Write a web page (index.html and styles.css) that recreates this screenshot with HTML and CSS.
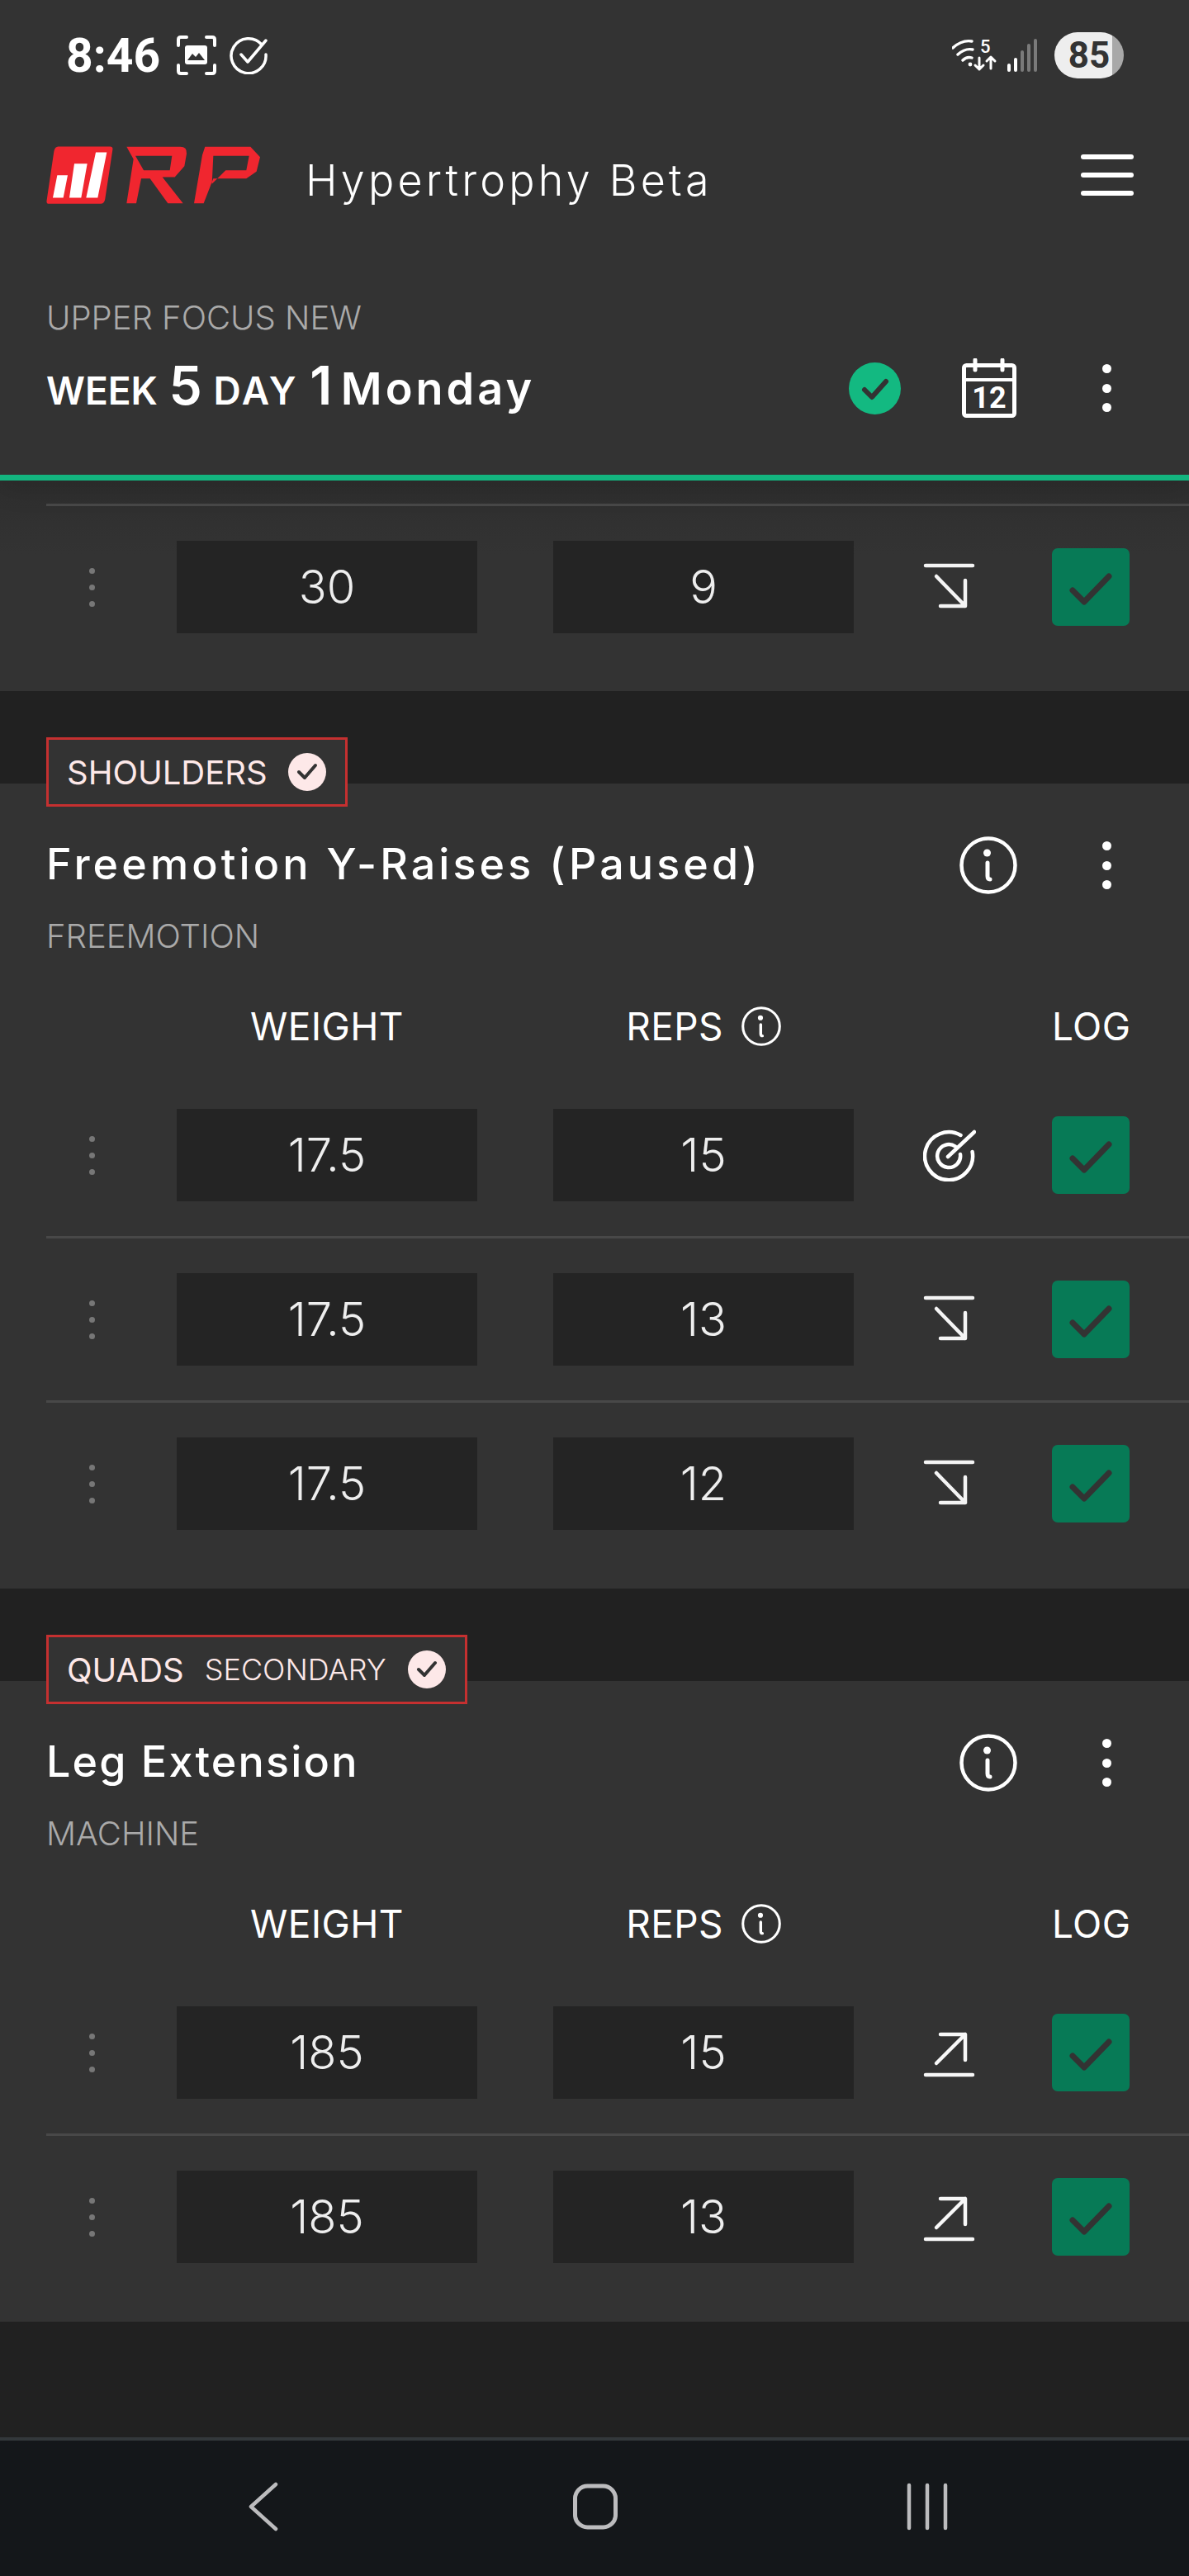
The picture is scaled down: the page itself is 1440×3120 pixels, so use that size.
FILE: index.html
```html
<!DOCTYPE html>
<html lang="en">
<head>
  <meta charset="UTF-8">
  <meta name="viewport" content="width=device-width, initial-scale=1.0">
  <title>RP Hypertrophy Beta</title>
  <link rel="stylesheet" href="styles.css">
</head>
<body>

  <svg class="sprite" aria-hidden="true">
    <symbol id="i-down" viewBox="0 0 64 64">
      <path d="M3 6H60M16 19L51 55M51 24V55H21" fill="none" stroke="#f4f4f4" stroke-width="4.5" stroke-linecap="round" stroke-linejoin="round"/>
    </symbol>
    <symbol id="i-up" viewBox="0 0 64 64">
      <path d="M3 59H60M16 45L51 10M21 10H51V41" fill="none" stroke="#f8f8f8" stroke-width="4.5" stroke-linecap="round" stroke-linejoin="round"/>
    </symbol>
    <symbol id="i-target" viewBox="0 0 64 64">
      <path d="M45.5 8A29 29 0 1 0 59.6 28M39 21.5A14 14 0 1 0 45 31M30 34L62 4" fill="none" stroke="#fff" stroke-width="4.5" stroke-linecap="round"/>
    </symbol>
    <symbol id="i-tick" viewBox="0 0 94 94">
      <path d="M25 51L39 65L69 34" fill="none" stroke="#333" stroke-width="7" stroke-linecap="round" stroke-linejoin="round"/>
    </symbol>
    <symbol id="i-info" viewBox="0 0 70 70">
      <circle cx="35" cy="35" r="32.5" fill="none" stroke="#fff" stroke-width="4.5"/>
      <circle cx="33.5" cy="20" r="4.5" fill="#fff"/>
      <path d="M34 32V48Q34 52 37 52" fill="none" stroke="#fff" stroke-width="5" stroke-linecap="round"/>
    </symbol>
    <symbol id="i-mini-tick" viewBox="0 0 46 46">
      <path d="M13 23L20 30L33 15" fill="none" stroke="#333" stroke-width="4" stroke-linecap="round" stroke-linejoin="round"/>
    </symbol>
  </svg>

  <header class="header">
    <div class="status-bar">
      <span class="clock">8:46</span>
      <svg class="status-frame" viewBox="0 0 48 48">
        <path d="M2 12V5Q2 2 5 2H12M36 2H43Q46 2 46 5V12M46 36V43Q46 46 43 46H36M12 46H5Q2 46 2 43V36" fill="none" stroke="#fff" stroke-width="4" stroke-linecap="round"/>
        <rect x="10" y="12" width="27" height="23" rx="3" fill="#fff"/>
        <path d="M13 30L19 22L23 26L27 21L34 30Z" fill="#333"/>
      </svg>
      <svg class="status-done" viewBox="0 0 46 46">
        <path d="M39 10A21 21 0 1 0 44 22" fill="none" stroke="#fff" stroke-width="3.5" stroke-linecap="round"/>
        <path d="M14 22L22 31L44 5" fill="none" stroke="#fff" stroke-width="3.5" stroke-linecap="round" stroke-linejoin="round"/>
      </svg>
      <div class="status-right">
        <svg class="status-wifi" viewBox="0 0 56 44">
          <path d="M1 13Q12 3 24 5M7 21Q16 13 25 15M13 28Q18 23 24 25" fill="none" stroke="#fff" stroke-width="3.4" stroke-linecap="round"/>
          <circle cx="22" cy="33" r="2.4" fill="#fff"/>
          <text x="34" y="19" class="wifi-five">5</text>
          <path d="M33 25V39M28 34L33 39L38 34M47 38V24M42 29L47 24L52 29" fill="none" stroke="#fff" stroke-width="3" stroke-linecap="round" stroke-linejoin="round"/>
        </svg>
        <svg class="status-signal" viewBox="0 0 38 40">
          <path d="M3 38V32M11 38V25" stroke="#fff" stroke-width="4" stroke-linecap="round"/>
          <path d="M19 38V16M27 38V8M35 38V2" stroke="#7a7a7a" stroke-width="4" stroke-linecap="round"/>
        </svg>
        <span class="battery">85</span>
      </div>
    </div>

    <div class="app-bar">
      <svg class="logo" viewBox="48 50 780 215">
        <path d="M92 54H280Q291 54 289 66L262 244Q260 262 245 262H58Q47 262 50 248L76 72Q79 54 92 54Z" fill="#f0262f"/>
        <path d="M88 158H126L110 240H72ZM150 116H197L175 240H132ZM228 75H268L235 240H193Z" fill="#fff"/>
        <path fill-rule="evenodd" d="M340 55H535Q560 55 558 80L550 125L515 165H470L545 260H490L425 170H393L375 260H340L365 100ZM372 88L402 140H497L505 88Z" fill="#f0262f"/>
        <path fill-rule="evenodd" d="M625 55H790L825 92L812 145L775 170H655L620 260H585L615 85ZM655 88L650 190L700 140H775L785 88Z" fill="#f0262f"/>
      </svg>
      <span class="app-title">Hypertrophy Beta</span>
      <button class="menu-btn" aria-label="Menu"><span></span><span></span><span></span></button>
    </div>

    <div class="workout">
      <p class="workout-name">UPPER FOCUS NEW</p>
      <div class="workout-row">
        <h1 class="workout-day"><small>WEEK</small> <b>5</b> <small class="day-label">DAY</small> <b>1</b> <span class="weekday">Monday</span></h1>
        <div class="workout-actions">
          <svg class="done-badge" viewBox="0 0 63 63">
            <circle cx="31.5" cy="31.5" r="31.5" fill="#13b981"/>
            <path d="M19 33L28 42L45 23" fill="none" stroke="#333" stroke-width="6" stroke-linecap="round" stroke-linejoin="round"/>
          </svg>
          <svg class="calendar" viewBox="0 0 72 72">
            <rect x="6.5" y="8.5" width="61" height="61" rx="3" fill="none" stroke="#fff" stroke-width="5"/>
            <path d="M4 26H70" stroke="#fff" stroke-width="4"/>
            <path d="M20 2V14M53 2V14" stroke="#fff" stroke-width="5" stroke-linecap="round"/>
            <text x="37" y="60" class="calendar-num">12</text>
          </svg>
          <span class="kebab"><i></i><i></i><i></i></span>
        </div>
      </div>
    </div>
  </header>

  <main class="main">
    <section class="card card-first">
      <div class="set-row">
        <span class="drag"><i></i><i></i><i></i></span>
        <div class="val">30</div>
        <div class="val">9</div>
        <svg class="trend"><use href="#i-down"/></svg>
        <svg class="log-box"><use href="#i-tick"/></svg>
      </div>
    </section>

    <section class="group">
      <div class="tag">
        <span class="tag-name">SHOULDERS</span>
        <svg class="tag-check" viewBox="0 0 46 46"><circle cx="23" cy="23" r="23" fill="#fde8e8"/><use href="#i-mini-tick"/></svg>
      </div>
      <div class="card">
        <div class="ex-head">
          <h2 class="ex-title ex-title-long">Freemotion Y-Raises (Paused)</h2>
          <svg class="info"><use href="#i-info"/></svg>
          <span class="kebab"><i></i><i></i><i></i></span>
        </div>
        <p class="ex-equip">FREEMOTION</p>
        <div class="cols">
          <span class="col-weight">WEIGHT</span>
          <span class="col-reps">REPS <svg class="info-small"><use href="#i-info"/></svg></span>
          <span class="col-log">LOG</span>
        </div>
        <div class="set-row">
          <span class="drag"><i></i><i></i><i></i></span>
          <div class="val">17.5</div>
          <div class="val">15</div>
          <svg class="trend"><use href="#i-target"/></svg>
          <svg class="log-box"><use href="#i-tick"/></svg>
        </div>
        <div class="set-row line">
          <span class="drag"><i></i><i></i><i></i></span>
          <div class="val">17.5</div>
          <div class="val">13</div>
          <svg class="trend"><use href="#i-down"/></svg>
          <svg class="log-box"><use href="#i-tick"/></svg>
        </div>
        <div class="set-row line">
          <span class="drag"><i></i><i></i><i></i></span>
          <div class="val">17.5</div>
          <div class="val">12</div>
          <svg class="trend"><use href="#i-down"/></svg>
          <svg class="log-box"><use href="#i-tick"/></svg>
        </div>
      </div>
    </section>

    <section class="group">
      <div class="tag">
        <span class="tag-name">QUADS</span>
        <span class="tag-sub">SECONDARY</span>
        <svg class="tag-check" viewBox="0 0 46 46"><circle cx="23" cy="23" r="23" fill="#fde8e8"/><use href="#i-mini-tick"/></svg>
      </div>
      <div class="card">
        <div class="ex-head">
          <h2 class="ex-title">Leg Extension</h2>
          <svg class="info"><use href="#i-info"/></svg>
          <span class="kebab"><i></i><i></i><i></i></span>
        </div>
        <p class="ex-equip">MACHINE</p>
        <div class="cols">
          <span class="col-weight">WEIGHT</span>
          <span class="col-reps">REPS <svg class="info-small"><use href="#i-info"/></svg></span>
          <span class="col-log">LOG</span>
        </div>
        <div class="set-row">
          <span class="drag"><i></i><i></i><i></i></span>
          <div class="val">185</div>
          <div class="val">15</div>
          <svg class="trend"><use href="#i-up"/></svg>
          <svg class="log-box"><use href="#i-tick"/></svg>
        </div>
        <div class="set-row line">
          <span class="drag"><i></i><i></i><i></i></span>
          <div class="val">185</div>
          <div class="val">13</div>
          <svg class="trend"><use href="#i-up"/></svg>
          <svg class="log-box"><use href="#i-tick"/></svg>
        </div>
      </div>
    </section>
  </main>

  <nav class="nav-bar">
    <svg class="nav-icon" viewBox="0 0 64 60">
      <path d="M50 3L20 30L50 57" fill="none" stroke="#bcbcbe" stroke-width="4.5" stroke-linecap="round" stroke-linejoin="round"/>
    </svg>
    <svg class="nav-icon" viewBox="0 0 64 60">
      <rect x="7.5" y="5" width="49" height="50" rx="15" fill="none" stroke="#bcbcbe" stroke-width="5"/>
    </svg>
    <svg class="nav-icon" viewBox="0 0 64 60">
      <path d="M10 4V56M32 4V56M54 4V56" fill="none" stroke="#bcbcbe" stroke-width="4.5" stroke-linecap="round"/>
    </svg>
  </nav>

</body>
</html>
```

FILE: styles.css
```css
* {
  box-sizing: border-box;
}

body {
  margin: 0;
  height: 3120px;
  display: flex;
  flex-direction: column;
  overflow: hidden;
  background-color: #212121;
  color: #fff;
  font-family: Inter, "Noto Sans", sans-serif;
}

h1, h2, p {
  margin: 0;
}

.sprite {
  display: none;
}

/* header */

.header {
  position: relative;
  height: 582px;
  flex: none;
  background-color: #333;
  border-bottom: 7px solid #13b57f;
  box-shadow: 0 10px 30px rgba(0, 0, 0, 0.12);
}

.status-bar {
  height: 134px;
  display: flex;
  align-items: center;
  padding-left: 80px;
  padding-right: 79px;
}

.clock {
  font-family: Roboto, sans-serif;
  font-size: 57px;
  font-weight: 700;
  margin-right: 20px;
}

.status-frame {
  width: 48px;
  height: 48px;
  margin-right: 16px;
}

.status-done {
  width: 46px;
  height: 46px;
}

.status-right {
  margin-left: auto;
  display: flex;
  align-items: center;
}

.status-wifi {
  width: 56px;
  height: 44px;
  margin-right: 10px;
}

.wifi-five {
  font-family: Roboto, sans-serif;
  font-size: 22px;
  font-weight: 500;
  fill: #fff;
}

.status-signal {
  width: 38px;
  height: 40px;
  margin-right: 20px;
}

.battery {
  width: 84px;
  height: 56px;
  border-radius: 28px;
  background: linear-gradient(to right, #eee 70px, #a8a8a8 70px);
  color: #333;
  font-family: Roboto, sans-serif;
  font-size: 44px;
  font-weight: 700;
  line-height: 56px;
  text-align: center;
}

.app-bar {
  height: 156px;
  display: flex;
  align-items: center;
  padding-left: 56px;
  padding-right: 67px;
}

.logo {
  width: 260px;
  height: 72px;
  margin-right: 54px;
}

.app-title {
  margin-top: 12px;
  font-size: 52px;
  font-weight: 300;
  letter-spacing: 4.2px;
}

.menu-btn {
  margin-left: auto;
  width: 64px;
  padding: 0;
  border: none;
  background: none;
  display: flex;
  flex-direction: column;
  gap: 16px;
}

.menu-btn span {
  height: 6px;
  border-radius: 3px;
  background-color: #fff;
}

.workout {
  padding: 60px 94px 0 56px;
}

.workout-name {
  font-size: 40px;
  font-weight: 300;
  line-height: 70px;
  color: #aaa;
}

.workout-row {
  height: 100px;
  display: flex;
  align-items: center;
}

.workout-day {
  font-size: 54px;
  font-weight: 600;
  line-height: 100px;
  white-space: nowrap;
}

.workout-day small {
  font-size: 46px;
}

.workout-day .day-label {
  letter-spacing: 3px;
}

.workout-day b {
  font-size: 64px;
  font-weight: 600;
}

.weekday {
  margin-left: -3px;
  letter-spacing: 4px;
}

.workout-actions {
  margin-left: auto;
  display: flex;
  align-items: center;
}

.done-badge {
  width: 63px;
  height: 63px;
  margin-right: 70px;
}

.calendar {
  width: 72px;
  height: 72px;
  margin-right: 102px;
}

.calendar-num {
  font-family: Roboto, sans-serif;
  font-size: 36px;
  font-weight: 700;
  fill: #fff;
  text-anchor: middle;
}

.kebab {
  width: 11px;
  display: flex;
  flex-direction: column;
  gap: 12.5px;
}

.kebab i {
  height: 11px;
  border-radius: 50%;
  background-color: #fff;
}

/* exercise cards */

.main {
  flex: 1;
}

.card {
  background-color: #333;
  padding-top: 51px;
  padding-bottom: 29px;
}

.card-first {
  padding-top: 28px;
  padding-bottom: 28px;
  background: linear-gradient(#2e2e2e, #333 90px);
}

.group {
  padding-top: 112px;
}

.tag {
  position: relative;
  margin-top: -56px;
  margin-bottom: -28px;
  margin-left: 56px;
  width: fit-content;
  height: 84px;
  display: flex;
  align-items: center;
  padding: 0 23px 0 22px;
  border: 3px solid #c53030;
  background-color: #333;
  color: #fde8e8;
}

.tag-name {
  font-size: 40px;
  margin-right: 25px;
}

.tag-sub {
  font-size: 36px;
  font-weight: 300;
  margin-right: 26px;
}

.tag-check {
  width: 46px;
  height: 46px;
}

.ex-head {
  height: 96px;
  display: flex;
  align-items: center;
  padding-left: 56px;
  padding-right: 94px;
}

.ex-title {
  padding-bottom: 4px;
  font-size: 52px;
  font-weight: 500;
  letter-spacing: 2.2px;
  white-space: nowrap;
}

.ex-title-long {
  letter-spacing: 4.1px;
}

.info {
  width: 70px;
  height: 70px;
  margin-left: auto;
  margin-right: 103px;
}

.ex-equip {
  margin-top: 14px;
  padding-left: 56px;
  font-size: 40px;
  font-weight: 300;
  line-height: 48px;
  color: #aaa;
}

.cols {
  height: 60px;
  margin-top: 55px;
  margin-bottom: 25px;
  margin-left: 56px;
  padding-right: 72px;
  display: grid;
  grid-template-columns: 66px 364px 364px 56px 94px;
  column-gap: 92px;
  align-items: center;
  font-size: 46px;
  font-weight: 400;
  letter-spacing: 0.4px;
  line-height: 60px;
}

.col-weight {
  grid-column: 2;
  text-align: center;
}

.col-reps {
  grid-column: 3;
  display: flex;
  align-items: center;
  justify-content: center;
  gap: 22px;
}

.col-log {
  grid-column: 5;
  text-align: right;
}

.info-small {
  width: 48px;
  height: 48px;
}

.set-row {
  margin-left: 56px;
  padding: 42px 72px 42px 0;
  border-top: 3px solid transparent;
  display: grid;
  grid-template-columns: 66px 364px 364px 56px 94px;
  column-gap: 92px;
  align-items: center;
}

.set-row.line,
.card-first .set-row {
  border-top-color: #484848;
}

.drag {
  width: 7px;
  margin-left: 52px;
  display: flex;
  flex-direction: column;
  gap: 13px;
}

.drag i {
  height: 7px;
  border-radius: 50%;
  background-color: #777;
}

.val {
  height: 112px;
  background-color: #242424;
  font-size: 56px;
  font-weight: 300;
  line-height: 112px;
  text-align: center;
  color: #eee;
}

.trend {
  width: 64px;
  height: 64px;
  margin-left: -8px;
}

.log-box {
  width: 94px;
  height: 94px;
  border-radius: 7px;
  background-color: #077a56;
}

/* android nav */

.nav-bar {
  height: 168px;
  flex: none;
  background-color: #14171a;
  border-top: 4px solid #33383b;
  display: flex;
  align-items: center;
  padding-bottom: 5px;
}

.nav-icon {
  width: 64px;
  height: 60px;
}

.nav-icon:nth-child(1) {
  margin-left: 284px;
}

.nav-icon:nth-child(2) {
  margin-left: 341px;
}

.nav-icon:nth-child(3) {
  margin-left: 338px;
}
```
